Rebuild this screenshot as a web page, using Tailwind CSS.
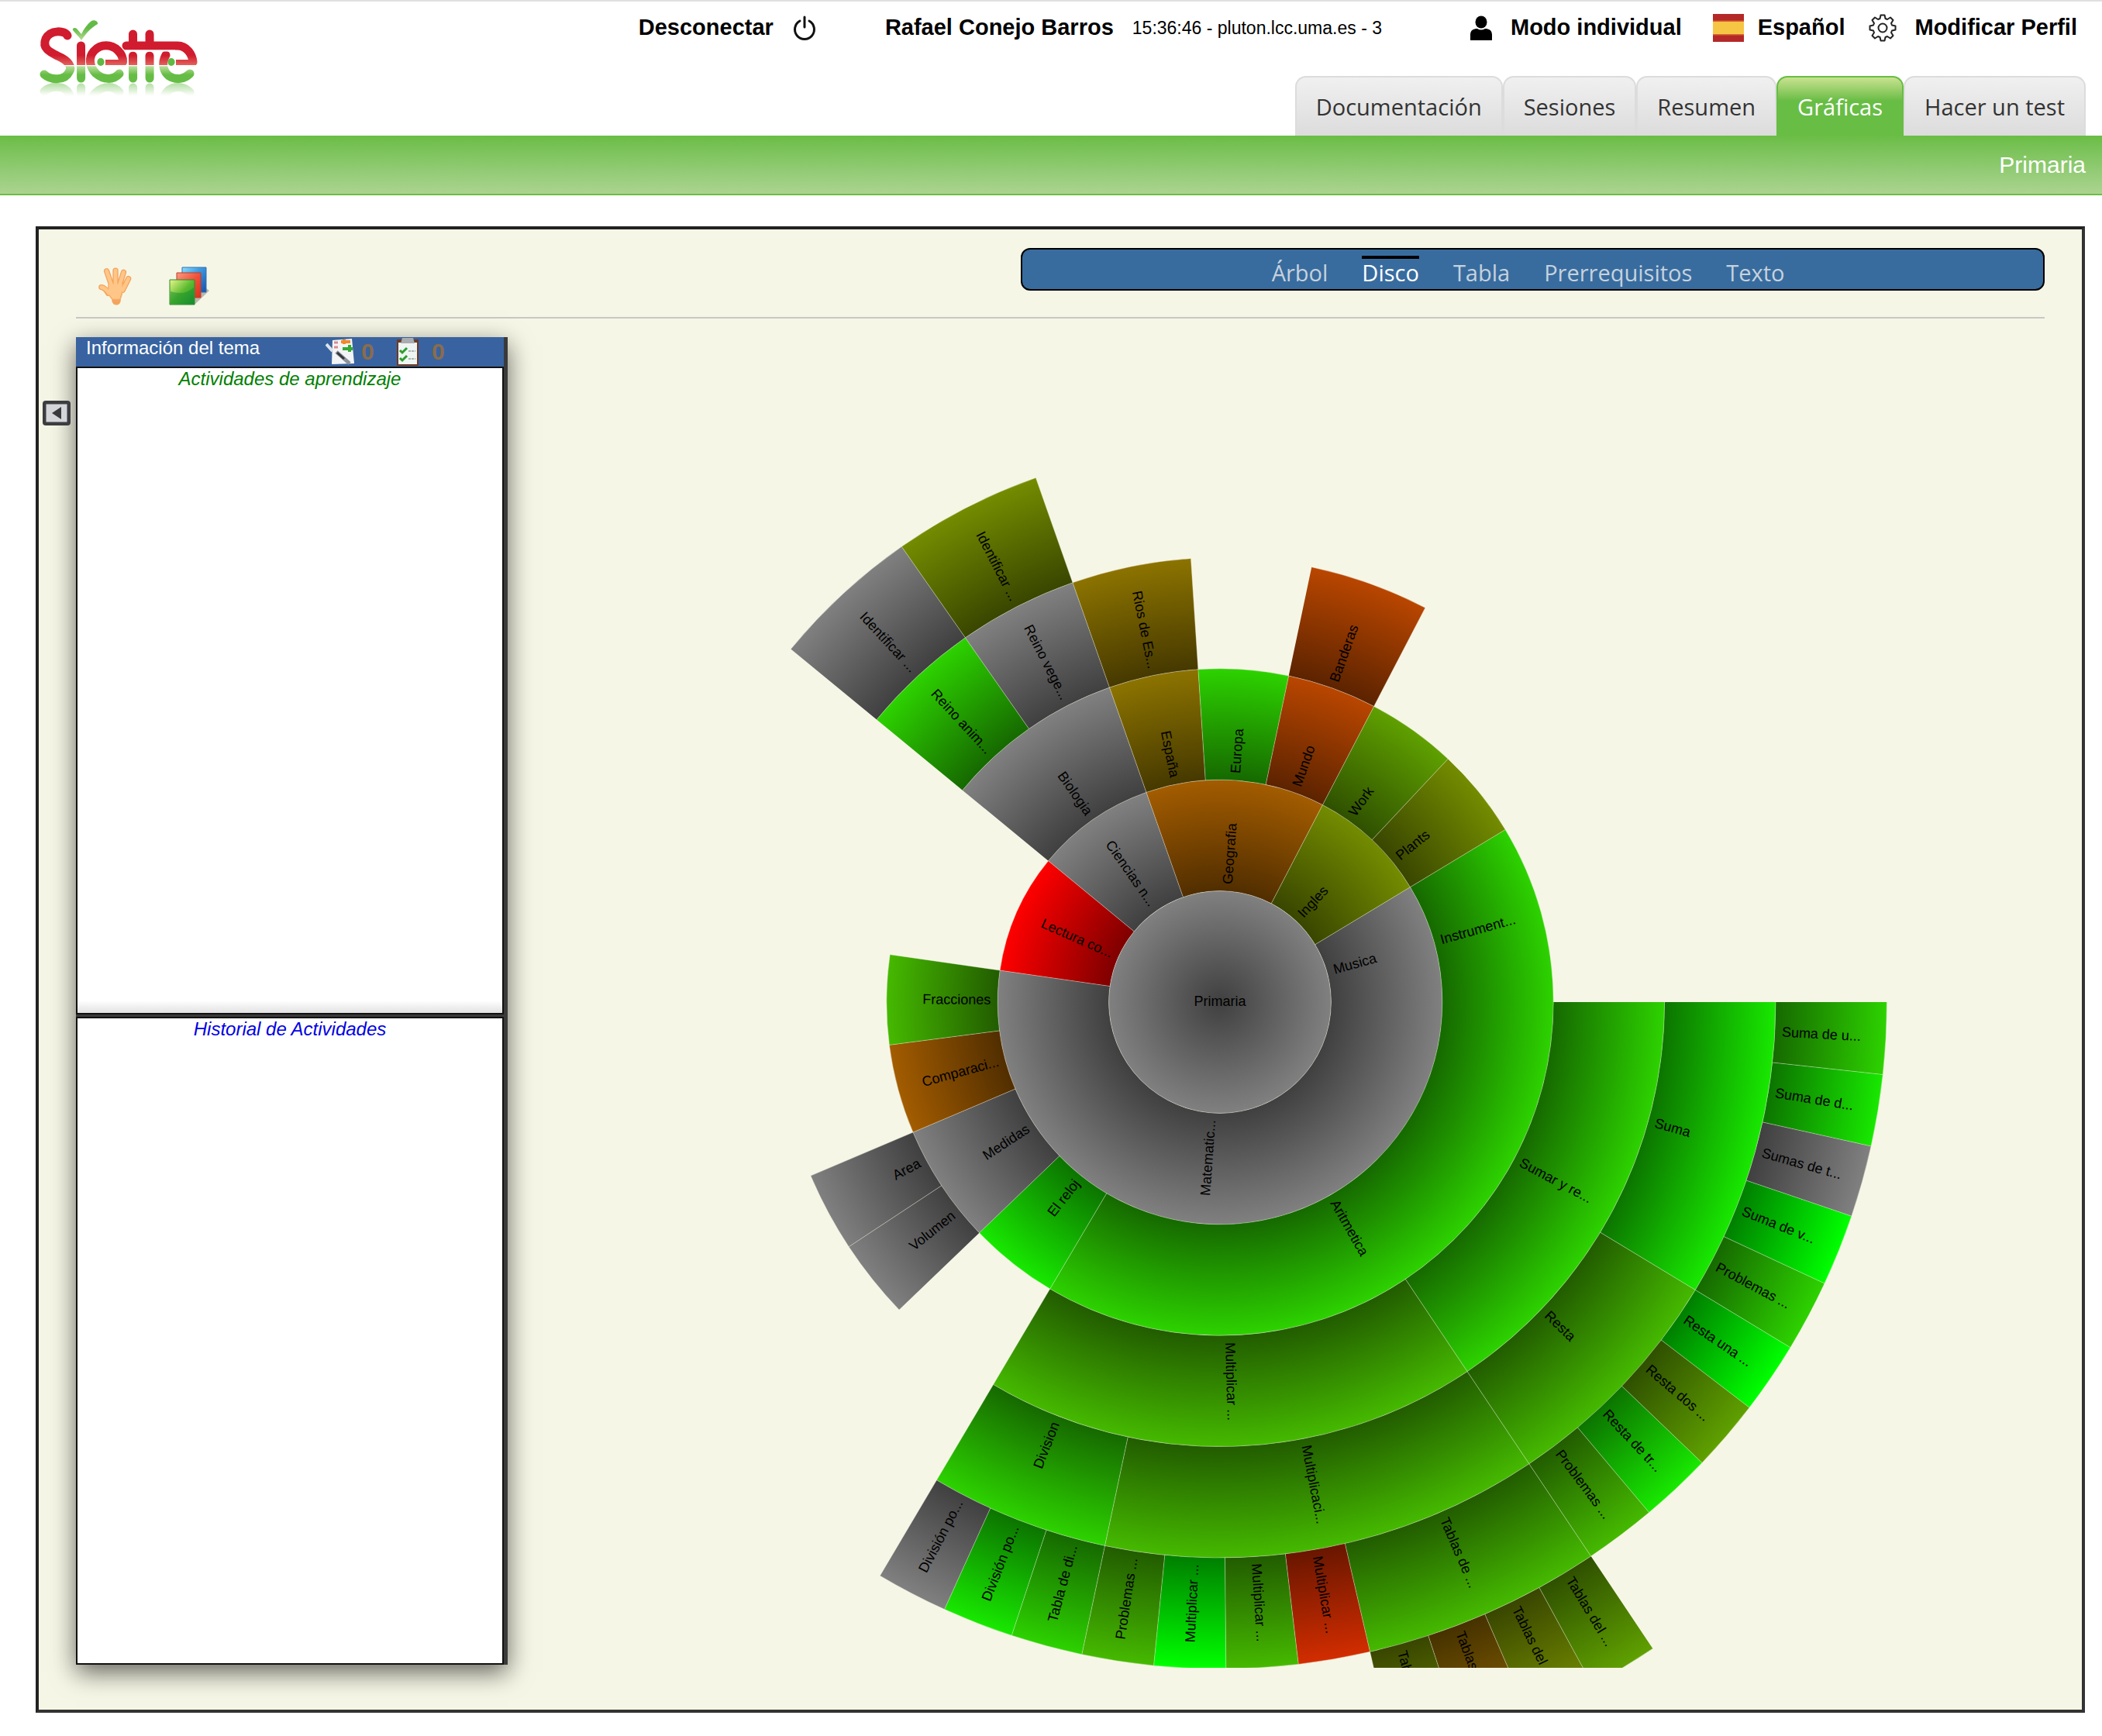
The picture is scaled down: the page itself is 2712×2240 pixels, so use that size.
<!DOCTYPE html>
<html lang="es">
<head>
    <meta charset="UTF-8">
    <meta name="viewport" content="width=device-width, initial-scale=1.0">
    <title>Siette - Gráficas</title>
    <script src="https://cdn.jsdelivr.net/npm/@tailwindcss/browser@4"></script>
</head>
<body class="bg-white min-h-screen font-['Liberation_Sans',Arial,sans-serif] text-black">
    <header class="flex justify-between border-t-2 border-[#e0e0e0] h-[175px]">
        <a href="#" aria-label="Siette" class="block shrink-0 ml-12 mt-[22px]">
            <svg class="block w-[212px] h-[106px]" viewBox="48 26 212 106" fill="none">
                <defs>
                    <linearGradient id="logoFill" gradientUnits="userSpaceOnUse" x1="0" y1="38" x2="0" y2="109">
                        <stop offset="0" stop-color="#d01c2e"/>
                        <stop offset=".5" stop-color="#d01c2e"/>
                        <stop offset=".67" stop-color="#e2605a"/>
                        <stop offset=".68" stop-color="#fff"/>
                        <stop offset=".69" stop-color="#fff"/>
                        <stop offset=".7" stop-color="#b9de9c"/>
                        <stop offset=".85" stop-color="#66bd45"/>
                        <stop offset="1" stop-color="#66bd45"/>
                    </linearGradient>
                    <linearGradient id="tickFill" x1="0" y1="0" x2="0" y2="1">
                        <stop offset=".4" stop-color="#62bb46"/>
                        <stop offset="1" stop-color="#b5dc95"/>
                    </linearGradient>
                    <linearGradient id="fade" gradientUnits="userSpaceOnUse" x1="0" y1="109" x2="0" y2="126">
                        <stop offset="0" stop-color="#fff" stop-opacity=".5"/>
                        <stop offset="1" stop-color="#fff" stop-opacity="0"/>
                    </linearGradient>
                    <mask id="fadeMask" maskUnits="userSpaceOnUse" x="48" y="109" width="212" height="20">
                        <rect x="48" y="109" width="212" height="20" fill="url(#fade)"/>
                    </mask>
                </defs>
                <g id="logoShape" stroke="url(#logoFill)" stroke-width="11" stroke-linecap="round">
                    <path d="M87 48C84 41 65 40 59 52C54 64 64 69 74 74C88 80 94 88 89 95C84 106 66 106 57 98"/>
                    <path d="M104.500 61L104.600 103"/>
                    <path d="M154 97C146 106 133 105 124 97C115 88 114 76 121 68C130 58 144 59 152 67C157 72 159 77 158.500 82"/>
                    <path d="M171.500 46L171.600 60M193 46L193.100 60"/>
                    <path d="M163 61H229C241 61 248 72 249 82"/>
                    <path d="M171.500 74L171.600 103M193 74L193.100 103"/>
                    <path d="M214 73C208 84 211 94 218 100C227 106 238 104 245 97"/>
                </g>
                <path d="M162 67.500H226" stroke="#fff" stroke-width="2"/>
                <path d="M136 79H160V86H136zM227 79H252V86H227z" fill="url(#logoFill)"/>
                <ellipse cx="130" cy="82" rx="4.600" ry="5" fill="#5fb944"/>
                <ellipse cx="221" cy="82" rx="4.600" ry="5" fill="#5fb944"/>
                <path d="M94 41C93 38 97 37 99 39L105 46C108 39 113 33 118 29C122 27 127 30 126 33C117 38 111 45 105 54C102 49 97 45 94 41z" fill="url(#tickFill)"/>
                <g mask="url(#fadeMask)"><use href="#logoShape" transform="translate(0 218) scale(1 -1)"/></g>
            </svg>
        </a>
        <div class="flex flex-col justify-between items-end">
            <div class="flex items-center h-[68px] pr-8 text-[29px] font-bold whitespace-nowrap">
                <a href="#" class="flex items-center gap-6">Desconectar
                    <svg class="w-[32px] h-[36px]" viewBox="0 0 32 36" fill="none" stroke="#111" stroke-width="3" stroke-linecap="round"><path d="M16 4V17M10 9A12.500 12.500 0 1 0 22 9"/></svg>
                </a>
                <span class="ml-[88px]">Rafael Conejo Barros</span>
                <span class="ml-6 text-[23px] font-normal">15:36:46 - pluton.lcc.uma.es - 3</span>
                <a href="#" class="ml-[114px] flex items-center gap-6">
                    <svg class="w-[28px] h-[32px]" viewBox="0 0 28 32"><ellipse cx="14" cy="8.500" rx="7.500" ry="8"/><path d="M0 32V25C0 19 4 17 9 17Q14 20 19 17C24 17 28 19 28 25V32z"/></svg>
                    Modo individual
                </a>
                <a href="#" class="ml-10 flex items-center gap-[18px]">
                    <svg class="w-[40px] h-[36px]" viewBox="0 0 40 36"><path fill="#b52828" d="M0 0H40V36H0z"/><path fill="#d5642f" d="M0 8.500H40V27.500H0z"/><path fill="#f7c544" d="M0 10H40V26H0z"/></svg>
                    Español
                </a>
                <a href="#" class="ml-[30px] flex items-center gap-6">
                    <svg class="w-[36px] h-[36px]" viewBox="0 0 36 36" fill="none" stroke="#222" stroke-width="2" stroke-linejoin="round"><path d="M15.500 1.500H20.500L21.500 6L24 7L28 4.500L31.500 8L29 12L30 14.500L34.500 15.500V20.500L30 21.500L29 24L31.500 28L28 31.500L24 29L21.500 30L20.500 34.500H15.500L14.500 30L12 29L8 31.500L4.500 28L7 24L6 21.500L1.500 20.500V15.500L6 14.500L7 12L4.500 8L8 4.500L12 7L14.500 6z"/><circle cx="18" cy="18" r="5.500"/></svg>
                    Modificar Perfil
                </a>
            </div>
            <nav class="flex pr-[21px] font-['Open_Sans',sans-serif] text-[29px] leading-[40px] text-[#333] whitespace-nowrap">
                <a href="#" class="h-[77px] pt-[18px] px-[25px] border-2 border-b-0 border-[#dcdcdc] rounded-t-[14px] bg-linear-to-b from-[#f0f0f0] to-[#dcdcdc]">Documentación</a>
                <a href="#" class="h-[77px] pt-[18px] px-[25px] border-2 border-b-0 border-[#dcdcdc] rounded-t-[14px] bg-linear-to-b from-[#f0f0f0] to-[#dcdcdc]">Sesiones</a>
                <a href="#" class="h-[77px] pt-[18px] px-[25px] border-2 border-b-0 border-[#dcdcdc] rounded-t-[14px] bg-linear-to-b from-[#f0f0f0] to-[#dcdcdc]">Resumen</a>
                <a href="#" aria-current="page" class="h-[77px] pt-[18px] px-[25px] border-2 border-b-0 border-[#68bd45] rounded-t-[14px] bg-linear-to-b from-[#c8e28f] to-[#68bd45] to-40% text-white">Gráficas</a>
                <a href="#" class="h-[77px] pt-[18px] px-[25px] border-2 border-b-0 border-[#dcdcdc] rounded-t-[14px] bg-linear-to-b from-[#f0f0f0] to-[#dcdcdc]">Hacer un test</a>
            </nav>
        </div>
    </header>

    <div class="flex items-center justify-end h-[77px] pr-[21px] border-b-2 border-[#6abd45] bg-linear-to-b from-[#6abd45] to-[#abd490] text-[30px] text-white">Primaria</div>

    <main class="relative ml-[46px] mr-[22px] mt-10 px-12 pt-6 pb-[54px] border-4 border-[#222] border-r-[#333] border-b-[#333] bg-[#f6f6e6]">
        <div class="flex justify-between border-b-2 border-[#c8c8c8] h-[91px]">
            <div class="flex items-start gap-12 pl-7 pt-6">
                <button type="button" aria-label="Mover">
                    <svg class="w-[44px] h-[50px]" viewBox="-1 -1 42 48" fill="none">
                        <g stroke="#f4a45c" stroke-width="7" stroke-linecap="round">
                            <path d="M3.500 24.500Q8 25 12 32M10 4.500L16 22M21 4L21 22M31 6L26 22M37 14L30 28"/>
                            <path d="M21 30L22 41" stroke-width="11"/>
                        </g>
                        <path d="M12 20H30C32 30 28 38 27 40H17C12 36 10 30 12 20z" fill="#f7ae68"/>
                        <g stroke="#ffc688" stroke-width="4.500" stroke-linecap="round">
                            <path d="M3.500 24.500Q8 25 13 32M10 4.500L16 22M21 4L21 22M31 6L26 22M37 14L30 28"/>
                        </g>
                        <path d="M13 21H29C30 29 27 35 26 39H18C13 35 12 29 13 21z" fill="#ffc688"/>
                    </svg>
                </button>
                <button type="button" aria-label="Capas">
                    <svg class="w-[52px] h-[50px]" viewBox="0 0 52 50">
                        <defs>
                            <linearGradient id="blueCard" x1="0" y1="0" x2="1" y2="1"><stop offset="0" stop-color="#8fe0fb"/><stop offset=".4" stop-color="#3f9be0"/><stop offset="1" stop-color="#1a4fa8"/></linearGradient>
                            <linearGradient id="redCard" x1="0" y1="0" x2="1" y2="1"><stop offset="0" stop-color="#ff9a80"/><stop offset=".5" stop-color="#f0503a"/><stop offset="1" stop-color="#d8301c"/></linearGradient>
                            <linearGradient id="greenCard" x1="0" y1="0" x2="1" y2="1"><stop offset="0" stop-color="#e9f78a"/><stop offset=".5" stop-color="#5cba30"/><stop offset="1" stop-color="#189030"/></linearGradient>
                        </defs>
                        <path d="M33 49L52 31L48 28L30 40z" fill="#000" fill-opacity=".25"/>
                        <path d="M17 1H48V33H17z" fill="url(#blueCard)" stroke="#2a72b8"/>
                        <path d="M10 8H41V40H10z" fill="url(#redCard)" stroke="#b8402c"/>
                        <path d="M1 17H33V49H1z" fill="url(#greenCard)" stroke="#2d8a30"/>
                        <path d="M2 32Q20 38 32 27V48H2z" fill="#0d8a2c" fill-opacity=".45"/>
                    </svg>
                </button>
            </div>
            <nav class="flex justify-center gap-[44px] w-[52%] h-[55px] pt-2 pr-3 border-2 border-black rounded-[12px] bg-[#386c9f] font-['Open_Sans',sans-serif] text-[29px] leading-[36px] text-[#c6d2dd] whitespace-nowrap">
                <a href="#" class="h-[43px] border-t-4 border-transparent">Árbol</a>
                <a href="#" aria-current="page" class="h-[43px] border-t-4 border-black text-white">Disco</a>
                <a href="#" class="h-[43px] border-t-4 border-transparent">Tabla</a>
                <a href="#" class="h-[43px] border-t-4 border-transparent">Prerrequisitos</a>
                <a href="#" class="h-[43px] border-t-4 border-transparent">Texto</a>
            </nav>
        </div>

        <button type="button" aria-label="Ocultar panel" class="absolute left-[5px] top-[221px]">
            <svg class="block w-[36px] h-[32px]" viewBox="0 0 36 32"><rect width="36" height="32" rx="4" fill="#3c3d40"/><rect x="4.500" y="4.500" width="27" height="23" fill="#d4d5d8"/><path d="M12 16L24 8V24z" fill="#3a3a3c"/></svg>
        </button>

        <div class="flex items-stretch mt-6">
            <aside class="flex flex-col shrink-0 w-[557px] mb-1 pr-[5px] bg-[#3a3a3a] text-[24px] leading-[28px] shadow-[0_10px_30px_rgba(0,0,0,0.6)]">
                <div class="flex items-start h-[38px] pl-[13px] bg-[#3863a0] text-white">
                    <h2 class="w-[309px]">Información del tema</h2>
                    <svg class="w-[38px] h-[36px] mt-px" viewBox="0 0 38 36">
                        <path d="M9 3L34 1L37 33L8 34z" fill="#f3f4f6"/>
                        <path d="M11 6h5M11 12h5" stroke="#d88a90" stroke-width="3"/>
                        <path d="M20 5h12M24 2v6" stroke="#ef8a2c" stroke-width="4"/>
                        <path d="M22 14h13M31 9v9" stroke="#35a835" stroke-width="4"/>
                        <path d="M1 8L9 17" stroke="#dfe3ea" stroke-width="4"/>
                        <path d="M14 18L31 33" stroke="#8d9199" stroke-width="5"/>
                        <path d="M15 19L24 27" stroke="#33363c" stroke-width="3"/>
                    </svg>
                    <span class="w-[48px] mt-[5px] ml-[8px] text-[30px] font-bold text-[#8b6c4c]">0</span>
                    <svg class="w-[30px] h-[37px] -ml-[3px] mt-px" viewBox="0 0 30 37">
                        <path d="M1 2H29V36H1z" fill="#6d3a26"/>
                        <path d="M3 6H27V34H3z" fill="#eef5f2"/>
                        <path d="M8 0H22L24 7H6z" fill="#a9acb0"/>
                        <path d="M5 16l3 3 6-6M5 26l3 3 6-6" fill="none" stroke="#2c9c2c" stroke-width="3"/>
                        <path d="M16 17h9M16 27h9" stroke="#a8b4b0" stroke-width="2" stroke-dasharray="3 1"/>
                    </svg>
                    <span class="mt-[5px] ml-[16px] text-[30px] font-bold text-[#8b6c4c]">0</span>
                </div>
                <section class="flex-1 border-2 border-[#111] bg-linear-to-t from-[#e2e2e2] to-white to-[16px] text-center">
                    <h3 class="italic text-[#008000]">Actividades de aprendizaje</h3>
                </section>
                <section class="flex-1 mt-[3px] border-2 border-[#111] bg-white text-center">
                    <h3 class="italic text-[#0000e6]">Historial de Actividades</h3>
                </section>
            </aside>
            <div class="flex-1 min-w-0">
                <svg id="disc" class="block w-full h-auto overflow-hidden font-['Liberation_Sans',Arial,sans-serif] text-[18px]" viewBox="0 0 1983 1717" role="img" aria-label="Disco de temas"></svg>
            </div>
        </div>
    </main>

    <script>
        const NS = 'http://www.w3.org/2000/svg';
        const disc = document.getElementById('disc');
        const CX = 919, CY = 858, RING = 143.4;
        const GREY = '#808080';

        // [name, ring, start angle, end angle, colour]; degrees, clockwise from the right
        const topics = [
            ['Musica', 1, 328.85, 360, GREY],
            ['Matematic...', 1, 0, 188.2, GREY],
            ['Lectura co...', 1, 188.2, 219.45, '#ff0000'],
            ['Ciencias n...', 1, 219.45, 250.65, GREY],
            ['Geografia', 1, 250.65, 297.5, '#a35c00'],
            ['Ingles', 1, 297.5, 328.85, '#738c00'],

            ['Instrument...', 2, 328.85, 360, '#2dd200'],
            ['Aritmetica', 2, 0, 120.65, '#2dd200'],
            ['El reloj', 2, 120.65, 136.2, '#18e800'],
            ['Medidas', 2, 136.2, 157, GREY],
            ['Comparaci...', 2, 157, 172.6, '#a35c00'],
            ['Fracciones', 2, 172.6, 188.2, '#45b900'],
            ['Biologia', 2, 219.45, 250.65, GREY],
            ['España', 2, 250.65, 266.25, '#8c7300'],
            ['Europa', 2, 266.25, 281.9, '#2dd200'],
            ['Mundo', 2, 281.9, 297.5, '#b94600'],
            ['Work', 2, 297.5, 313.15, '#5fa000'],
            ['Plants', 2, 313.15, 328.85, '#738c00'],

            ['Sumar y re...', 3, 0, 56.2, '#2dd200'],
            ['Multiplicar ...', 3, 56.2, 120.65, '#45b900'],
            ['Volumen', 3, 136.2, 146.6, GREY],
            ['Area', 3, 146.6, 157, GREY],
            ['Reino anim...', 3, 219.45, 235.05, '#2dd200'],
            ['Reino vege...', 3, 235.05, 250.65, GREY],
            ['Rios de Es...', 3, 250.65, 266.25, '#8c7300'],
            ['Banderas', 3, 281.9, 297.5, '#b94600'],

            ['Suma', 4, 0, 31.2, '#18e800'],
            ['Resta', 4, 31.2, 56.2, '#45b900'],
            ['Multiplicaci...', 4, 56.2, 101.95, '#45b900'],
            ['Division', 4, 101.95, 120.65, '#2dd200'],
            ['Identificar ...', 4, 219.45, 235.05, GREY],
            ['Identificar ...', 4, 235.05, 250.65, '#738c00'],

            ['Suma de u...', 5, 0, 6.24, '#2dd200'],
            ['Suma de d...', 5, 6.24, 12.48, '#18e800'],
            ['Sumas de t...', 5, 12.48, 18.72, GREY],
            ['Suma de v...', 5, 18.72, 24.96, '#00ff00'],
            ['Problemas ...', 5, 24.96, 31.2, '#2dd200'],
            ['Resta una ...', 5, 31.2, 37.45, '#00ff00'],
            ['Resta dos ...', 5, 37.45, 43.7, '#5fa000'],
            ['Resta de tr...', 5, 43.7, 49.95, '#18e800'],
            ['Problemas ...', 5, 49.95, 56.2, '#45b900'],
            ['Tablas de ...', 5, 56.2, 77, '#45b900'],
            ['Multiplicar ...', 5, 77, 83.24, '#d22d00'],
            ['Multiplicar ...', 5, 83.24, 89.48, '#45b900'],
            ['Multiplicar ...', 5, 89.48, 95.7, '#00ff00'],
            ['Problemas ...', 5, 95.7, 101.95, '#45b900'],
            ['Tabla de di...', 5, 101.95, 108.2, '#2dd200'],
            ['División po...', 5, 108.2, 114.4, '#18e800'],
            ['División po...', 5, 114.4, 120.65, GREY],

            ['Tablas del ...', 6, 56.2, 61.4, '#5fa000'],
            ['Tablas del ...', 6, 61.4, 66.6, '#738c00'],
            ['Tablas del ...', 6, 66.6, 71.8, '#8c6400'],
            ['Tablas del ...', 6, 71.8, 77, '#738c00']
        ];

        function add(name, attrs, parent) {
            const el = document.createElementNS(NS, name);
            for (const key in attrs) el.setAttribute(key, attrs[key]);
            (parent || disc).appendChild(el);
            return el;
        }

        function darker(colour) {
            const n = parseInt(colour.slice(1), 16);
            return 'rgb(' + [n >> 16, n >> 8 & 255, n & 255].map(v => v >> 1).join(',') + ')';
        }

        function point(r, deg) {
            const a = deg * Math.PI / 180;
            return (CX + r * Math.cos(a)) + ' ' + (CY + r * Math.sin(a));
        }

        const defs = add('defs', {});
        const known = {};

        // one gradient for each ring and colour, dark at the inner edge
        function fill(ring, colour) {
            const id = 'g' + ring + colour.slice(1);
            if (!known[id]) {
                known[id] = true;
                const g = add('radialGradient', {id: id, gradientUnits: 'userSpaceOnUse', cx: CX, cy: CY, r: RING * (ring + 1)}, defs);
                add('stop', {offset: ring / (ring + 1), 'stop-color': darker(colour)}, g);
                add('stop', {offset: 1, 'stop-color': colour}, g);
            }
            return 'url(#' + id + ')';
        }

        function sector(ring, from, to, colour) {
            const r0 = ring * RING, r1 = r0 + RING, large = to - from > 180 ? 1 : 0;
            add('path', {
                d: `M${point(r0, from)}L${point(r1, from)}A${r1} ${r1} 0 ${large} 1 ${point(r1, to)}L${point(r0, to)}A${r0} ${r0} 0 ${large} 0 ${point(r0, from)}z`,
                fill: fill(ring, colour)
            });
        }

        // thin light seam along the outer arc and the closing side
        function seam(ring, from, to) {
            const r0 = ring * RING, r1 = r0 + RING, large = to - from > 180 ? 1 : 0;
            const side = to < 360 ? 'L' + point(r0, to) : '';
            add('path', {
                d: `M${point(r1, from)}A${r1} ${r1} 0 ${large} 1 ${point(r1, to)}${side}`,
                fill: 'none',
                stroke: '#f6f6e6',
                'stroke-opacity': 0.4
            });
        }

        function label(text, ring, from, to) {
            const mid = (from + to) / 2;
            const flip = mid > 90 && mid < 270;
            const r = ring * RING + 9;
            const el = add('text', {
                x: flip ? -r : r,
                y: 5,
                'text-anchor': flip ? 'end' : 'start',
                transform: `translate(${CX} ${CY}) rotate(${flip ? mid - 180 : mid})`
            });
            el.textContent = text;
        }

        topics.forEach(([text, ring, from, to, colour]) => sector(ring, from, to, colour));
        topics.forEach(([text, ring, from, to]) => seam(ring, from, to));
        add('circle', {cx: CX, cy: CY, r: RING, fill: fill(0, GREY), stroke: '#f6f6e6', 'stroke-opacity': 0.4});
        topics.forEach(([text, ring, from, to]) => label(text, ring, from, to));
        add('text', {x: CX, y: CY + 5, 'text-anchor': 'middle'}).textContent = 'Primaria';
    </script>
</body>
</html>
